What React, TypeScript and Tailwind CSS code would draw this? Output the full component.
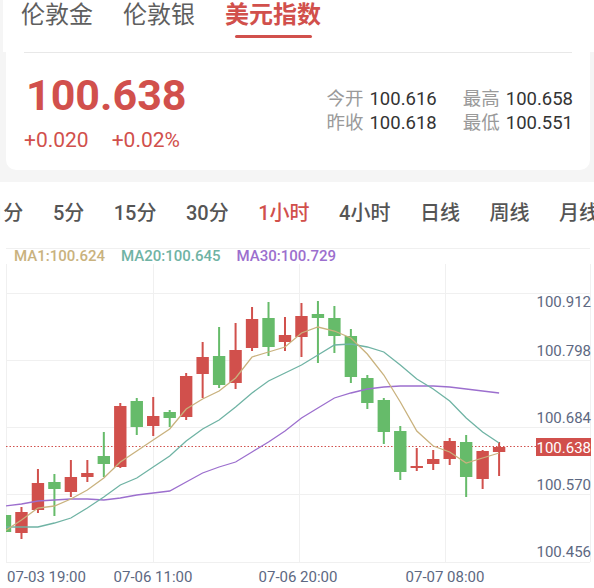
const RED = '#d1504c'
const GREEN = '#66bb6a'
const AXIS = '#5d6882'

const markets = ['伦敦金', '伦敦银', '美元指数']
const periods = ['1分', '5分', '15分', '30分', '1小时', '4小时', '日线', '周线', '月线']

const stats = [
  ['今开', '100.616'],
  ['最高', '100.658'],
  ['昨收', '100.618'],
  ['最低', '100.551'],
]

// plot-space pixels: [bodyTop, bodyBottom, wickTop, wickBottom, rising]
const candles: [number, number, number, number, boolean][] = [
  [515, 532, 512, 535, true],
  [512, 533, 507, 539, false],
  [483, 510, 469, 513, false],
  [482, 489, 474, 516, true],
  [477, 492, 460, 497, false],
  [473, 477, 460, 482, false],
  [456, 464, 432, 477, true],
  [406, 467, 403, 468, false],
  [401, 427, 398, 435, true],
  [416, 426, 397, 436, false],
  [412, 418, 410, 427, true],
  [376, 417, 373, 420, false],
  [357, 374, 342, 398, false],
  [356, 385, 327, 388, true],
  [350, 383, 323, 389, false],
  [319, 348, 307, 351, false],
  [318, 347, 302, 356, true],
  [335, 342, 317, 351, false],
  [316, 337, 303, 357, false],
  [314, 318, 301, 363, true],
  [318, 336, 306, 353, true],
  [336, 377, 329, 383, true],
  [378, 403, 375, 409, true],
  [400, 432, 398, 444, true],
  [431, 472, 426, 480, true],
  [466, 468, 448, 471, false],
  [459, 464, 450, 470, false],
  [441, 459, 438, 465, false],
  [442, 477, 435, 497, true],
  [451, 479, 450, 489, false],
  [447, 452, 442, 476, false],
]

const ma1 = [531, 520, 508, 506, 499, 490, 478, 462, 451, 440, 429, 409, 399, 391, 378, 357, 352, 347, 333, 327, 331, 338, 354, 375, 402, 431, 446, 452, 463, 458, 453]
const ma20 = [527, 527, 527, 523, 518, 508, 497, 485, 478, 467, 456, 441, 429, 420, 407, 393, 381, 373, 365, 355, 345, 344, 347, 352, 365, 379, 389, 401, 418, 432, 443]
const ma30 = [506, 504, 501, 500, 499, 499, 500, 498, 495, 493, 491, 482, 473, 467, 462, 452, 442, 431, 418, 408, 398, 393, 389, 387, 386, 386, 386, 387, 389, 391, 393]

const cx = (i: number) => 5 + 16.47 * i
const line = (ys: number[]) => ys.map((y, i) => `${cx(i).toFixed(1)},${y}`).join(' ')

const gridY = [293, 360, 427, 494, 562]
const gridX = [6, 153, 299, 445, 590]

const priceTicks = [
  { label: '100.912', y: 307 },
  { label: '100.798', y: 356 },
  { label: '100.684', y: 423 },
  { label: '100.570', y: 490 },
  { label: '100.456', y: 557 },
]

const timeTicks = [
  { label: '07-03 19:00', x: 7, anchor: 'start' },
  { label: '07-06 11:00', x: 153, anchor: 'middle' },
  { label: '07-06 20:00', x: 298, anchor: 'middle' },
  { label: '07-07 08:00', x: 445, anchor: 'middle' },
]

function KlineChart() {
  return (
    <svg width={594} height={324} viewBox="0 264 594 324" className="block">
      <defs>
        <clipPath id="plot">
          <rect x={6} y={264} width={584} height={298} />
        </clipPath>
      </defs>

      {gridY.map((y) => (
        <line key={y} x1={6} x2={590} y1={y + 0.5} y2={y + 0.5} stroke="#f0f0f0" />
      ))}
      {gridX.map((x) => (
        <line key={x} x1={x + 0.5} x2={x + 0.5} y1={264} y2={562} stroke="#f0f0f0" />
      ))}

      <line x1={6} x2={536} y1={446.5} y2={446.5} stroke={RED} strokeWidth={1} strokeDasharray="1.5 2" />

      <g clipPath="url(#plot)">
        {candles.map(([top, bottom, high, low, up], i) => {
          const color = up ? GREEN : RED
          const x = cx(i)
          return (
            <g key={i} fill={color}>
              <rect x={x - 1} y={high} width={2} height={low - high} />
              <rect x={x - 6.2} y={top} width={12.4} height={Math.max(bottom - top, 2)} />
            </g>
          )
        })}
        <polyline points={line(ma30)} fill="none" stroke="#9c6fce" strokeWidth={1.3} />
        <polyline points={line(ma20)} fill="none" stroke="#6fb3a4" strokeWidth={1.3} />
        <polyline points={line(ma1)} fill="none" stroke="#c9b27e" strokeWidth={1.3} />
      </g>

      {priceTicks.map((t) => (
        <text key={t.label} x={591} y={t.y} textAnchor="end" fontSize={15} fill={AXIS}>
          {t.label}
        </text>
      ))}

      <rect x={536} y={438} width={55} height={18} fill={RED} />
      <text x={591} y={452.5} textAnchor="end" fontSize={15} fill="#fff">
        100.638
      </text>

      {timeTicks.map((t) => (
        <text key={t.label} x={t.x} y={582} textAnchor={t.anchor as 'start' | 'middle'} fontSize={15} fill={AXIS}>
          {t.label}
        </text>
      ))}
    </svg>
  )
}

export default function App() {
  return (
    <div className="w-[594px] h-[588px] overflow-hidden bg-[#f5f5f5] font-['Roboto','Noto_Sans_CJK_SC',sans-serif]">
      {/* market tabs */}
      <div className="ml-[3px] h-[52px] bg-white pl-[18px] flex gap-[30px]">
        {markets.map((m, i) => {
          const active = i === 2
          return (
            <div key={m} className="flex flex-col items-center">
              <span
                className={
                  active
                    ? 'text-[24px] leading-[30px] font-bold text-[#d1504c]'
                    : 'text-[24px] leading-[30px] text-[#5f5f5f]'
                }
              >
                {m}
              </span>
              {active && <span className="mt-[5px] h-[3px] w-[77px] rounded-full bg-[#d1504c]" />}
            </div>
          )
        })}
      </div>

      {/* quote card */}
      <div className="ml-[6px] w-[584px] bg-white rounded-b-[10px]">
        <div className="mx-[18px] h-px bg-[#e8e8e8]" />
        <div className="flex justify-between pl-[18px] pr-[17px] pt-[21px] pb-[19px]">
          <div>
            <div className="ml-[2px] text-[43px] leading-[43px] font-bold text-[#d1504c]">100.638</div>
            <div className="mt-[13px] flex gap-[23px] text-[21px] leading-[21px] text-[#d1504c]">
              <span>+0.020</span>
              <span>+0.02%</span>
            </div>
          </div>
          <div className="mt-[13px] self-start grid grid-cols-[auto_auto] gap-x-[26px] text-[18.5px] leading-[24px]">
            {stats.map(([k, v]) => (
              <div key={k} className="flex gap-[6px]">
                <span className="text-[#9a9a9a]">{k}</span>
                <span className="text-[#333]">{v}</span>
              </div>
            ))}
          </div>
        </div>
      </div>

      {/* chart panel */}
      <div className="mt-[12px] bg-white">
        <div className="overflow-hidden pt-[11px]">
          <div className="-ml-[8px] flex h-[40px] items-center gap-[29.5px] whitespace-nowrap text-[20px] font-medium">
            {periods.map((p) => (
              <span key={p} className={p === '1小时' ? 'text-[#d1504c]' : 'text-[#555]'}>
                {p}
              </span>
            ))}
          </div>
        </div>
        <div className="mt-[15px] ml-[6px] mr-[4px] h-px bg-[#f0f0f0]" />
        <div className="flex h-[15px] items-center gap-[16px] pl-[14px] text-[15px] leading-[15px] font-medium">
          <span className="text-[#c9b27e]">MA1:100.624</span>
          <span className="text-[#6fb3a4]">MA20:100.645</span>
          <span className="text-[#9c6fce]">MA30:100.729</span>
        </div>
        <KlineChart />
      </div>
    </div>
  )
}
